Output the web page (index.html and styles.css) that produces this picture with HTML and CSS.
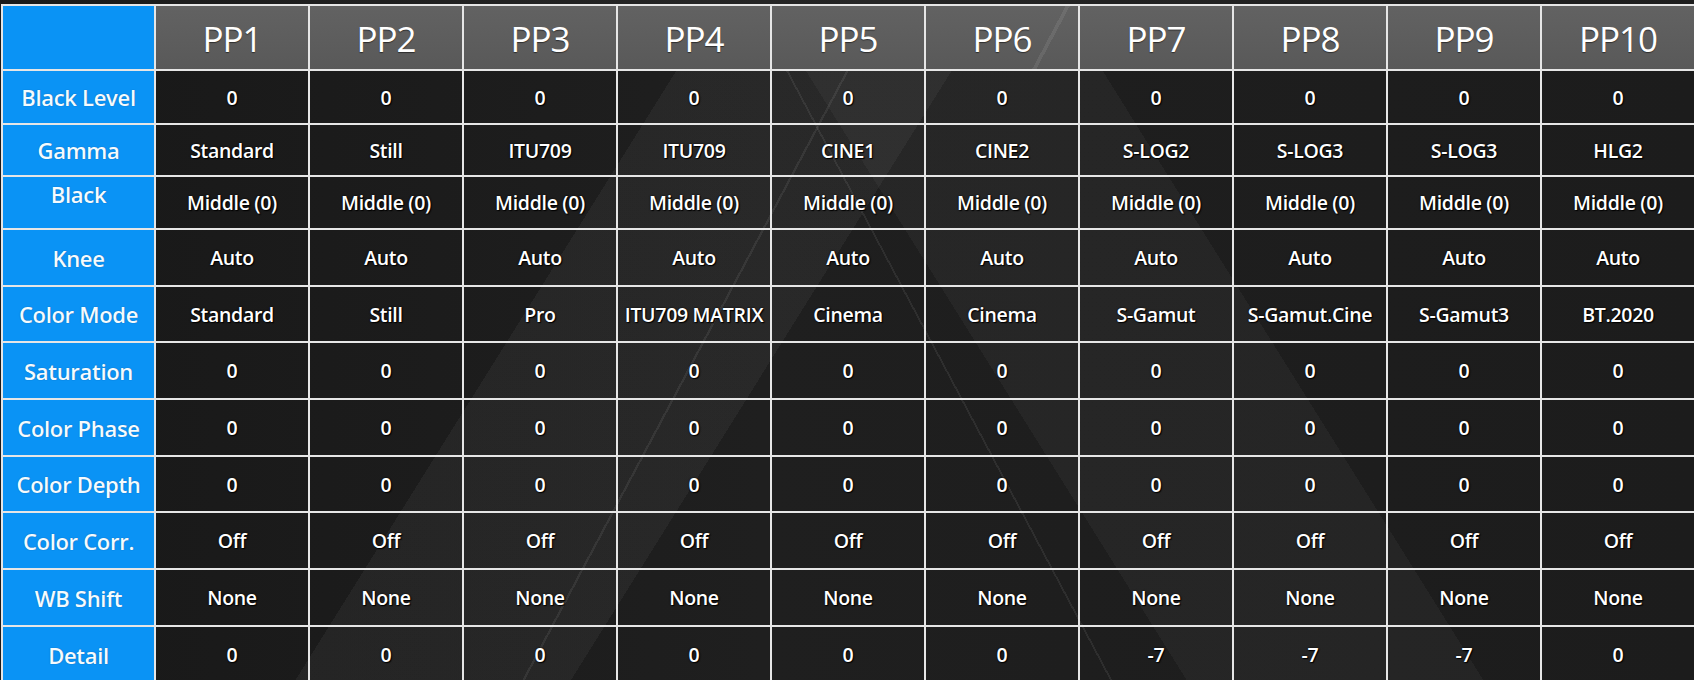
FILE: index.html
```html
<!DOCTYPE html>
<html>
<head>
<meta charset="utf-8">
<link rel="stylesheet" href="styles.css">
</head>
<body>
<div class="stage">
  <div class="grid">
    <div class="corner"></div>
    <div class="head">PP1</div><div class="head">PP2</div><div class="head">PP3</div><div class="head">PP4</div><div class="head">PP5</div><div class="head">PP6</div><div class="head">PP7</div><div class="head">PP8</div><div class="head">PP9</div><div class="head">PP10</div>

    <div class="label">Black Level</div>
    <div class="cell">0</div><div class="cell">0</div><div class="cell">0</div><div class="cell">0</div><div class="cell">0</div><div class="cell">0</div><div class="cell">0</div><div class="cell">0</div><div class="cell">0</div><div class="cell">0</div>

    <div class="label">Gamma</div>
    <div class="cell">Standard</div><div class="cell">Still</div><div class="cell">ITU709</div><div class="cell">ITU709</div><div class="cell">CINE1</div><div class="cell">CINE2</div><div class="cell">S-LOG2</div><div class="cell">S-LOG3</div><div class="cell">S-LOG3</div><div class="cell">HLG2</div>

    <div class="label label-top">Black</div>
    <div class="cell">Middle (0)</div><div class="cell">Middle (0)</div><div class="cell">Middle (0)</div><div class="cell">Middle (0)</div><div class="cell">Middle (0)</div><div class="cell">Middle (0)</div><div class="cell">Middle (0)</div><div class="cell">Middle (0)</div><div class="cell">Middle (0)</div><div class="cell">Middle (0)</div>

    <div class="label">Knee</div>
    <div class="cell">Auto</div><div class="cell">Auto</div><div class="cell">Auto</div><div class="cell">Auto</div><div class="cell">Auto</div><div class="cell">Auto</div><div class="cell">Auto</div><div class="cell">Auto</div><div class="cell">Auto</div><div class="cell">Auto</div>

    <div class="label">Color Mode</div>
    <div class="cell">Standard</div><div class="cell">Still</div><div class="cell">Pro</div><div class="cell">ITU709 MATRIX</div><div class="cell">Cinema</div><div class="cell">Cinema</div><div class="cell">S-Gamut</div><div class="cell">S-Gamut.Cine</div><div class="cell">S-Gamut3</div><div class="cell">BT.2020</div>

    <div class="label">Saturation</div>
    <div class="cell">0</div><div class="cell">0</div><div class="cell">0</div><div class="cell">0</div><div class="cell">0</div><div class="cell">0</div><div class="cell">0</div><div class="cell">0</div><div class="cell">0</div><div class="cell">0</div>

    <div class="label">Color Phase</div>
    <div class="cell">0</div><div class="cell">0</div><div class="cell">0</div><div class="cell">0</div><div class="cell">0</div><div class="cell">0</div><div class="cell">0</div><div class="cell">0</div><div class="cell">0</div><div class="cell">0</div>

    <div class="label">Color Depth</div>
    <div class="cell">0</div><div class="cell">0</div><div class="cell">0</div><div class="cell">0</div><div class="cell">0</div><div class="cell">0</div><div class="cell">0</div><div class="cell">0</div><div class="cell">0</div><div class="cell">0</div>

    <div class="label">Color Corr.</div>
    <div class="cell">Off</div><div class="cell">Off</div><div class="cell">Off</div><div class="cell">Off</div><div class="cell">Off</div><div class="cell">Off</div><div class="cell">Off</div><div class="cell">Off</div><div class="cell">Off</div><div class="cell">Off</div>

    <div class="label">WB Shift</div>
    <div class="cell">None</div><div class="cell">None</div><div class="cell">None</div><div class="cell">None</div><div class="cell">None</div><div class="cell">None</div><div class="cell">None</div><div class="cell">None</div><div class="cell">None</div><div class="cell">None</div>

    <div class="label">Detail</div>
    <div class="cell">0</div><div class="cell">0</div><div class="cell">0</div><div class="cell">0</div><div class="cell">0</div><div class="cell">0</div><div class="cell">-7</div><div class="cell">-7</div><div class="cell">-7</div><div class="cell">0</div>
  </div>
</div>
</body>
</html>
```

FILE: styles.css
```css
html, body {
  margin: 0;
  padding: 0;
  width: 1694px;
  height: 680px;
  overflow: hidden;
  background: #161616;
}

.stage {
  width: 1694px;
  height: 680px;
  overflow: hidden;
  padding-top: 4px;
  padding-left: 1px;
  box-sizing: border-box;
  background: linear-gradient(90deg, #1a1a1a 0%, #262626 45%, #1e1e1e 100%);
  font-family: "Open Sans", "Noto Sans", "DejaVu Sans", sans-serif;
}

.grid {
  display: grid;
  grid-template-columns: 151px repeat(10, 152px);
  grid-template-rows: 63px 52px 50px 51px 55px 54px 55px 55px 54px 55px 55px 55px;
  gap: 2px;
  padding: 2px;
  width: max-content;
  background: #e6e6e6;
}

.corner {
  background: #0a93f5;
}

.head {
  display: flex;
  align-items: center;
  justify-content: center;
  background:
    linear-gradient(118deg, transparent 0 52%, rgba(255,255,255,0.08) 52% 52.2%, transparent 52.2% 100%) fixed,
    linear-gradient(180deg, #626262, #595959);
  color: #fff;
  font-size: 35px;
  font-weight: 500;
  letter-spacing: -1px;
  text-shadow: 0 1px 1px rgba(0,0,0,0.5);
  padding-top: 2px;
}

.label {
  display: flex;
  align-items: center;
  justify-content: center;
  background: #0a93f5;
  color: #f4fbff;
  font-size: 22px;
  font-weight: 600;
  letter-spacing: -0.3px;
  text-shadow: 0 0 1px rgba(0,40,90,0.6);
}

.label-top {
  padding-bottom: 18px;
}

.cell {
  display: flex;
  align-items: center;
  justify-content: center;
  background:
    linear-gradient(118deg, transparent 0 43%, rgba(255,255,255,0.07) 43% 43.12%, transparent 43.12% 100%) fixed,
    linear-gradient(62deg, transparent 0 54%, rgba(255,255,255,0.07) 54% 54.1%, transparent 54.1% 100%) fixed,
    linear-gradient(122deg, transparent 0 34%, rgba(255,255,255,0.045) 34% 47%, transparent 47% 100%) fixed,
    linear-gradient(58deg, transparent 0 56%, rgba(255,255,255,0.035) 56% 70%, transparent 70% 100%) fixed,
    linear-gradient(90deg, #181818 0%, #1f1f1f 45%, #1c1c1c 100%) fixed;
  color: #fff;
  font-size: 19.5px;
  font-weight: 600;
  letter-spacing: -0.3px;
  text-shadow: 0 0 2px #000, 1px 1px 1px #000;
  white-space: nowrap;
}
```
